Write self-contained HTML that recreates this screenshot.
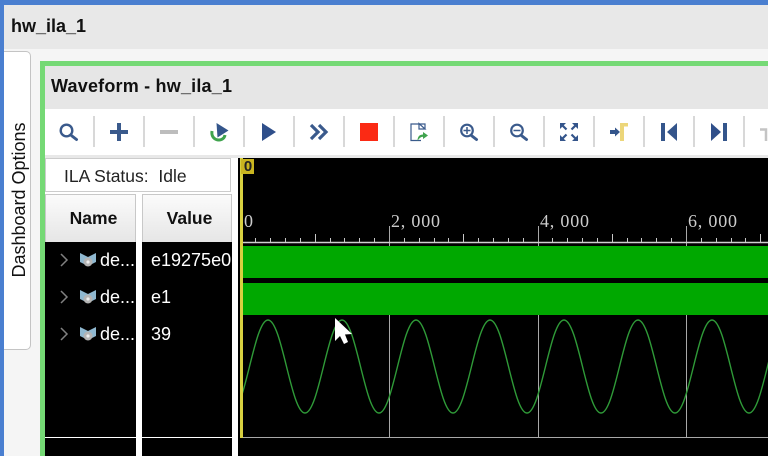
<!DOCTYPE html>
<html lang="en">
<head>
<meta charset="utf-8">
<title>hw_ila_1</title>
<style>
html,body{margin:0;padding:0;width:768px;height:456px;overflow:hidden;background:#f5f5f5;font-family:"Liberation Sans",sans-serif;color:#111}
div,span{position:absolute;white-space:nowrap}
.hdr{background:linear-gradient(#fbfbfb,#e6e6e6);border:1px solid #c8c8c8;border-bottom:0;box-sizing:border-box;font-weight:bold;font-size:17.500px;text-align:center;line-height:46px}
.w{color:#fff;font-size:18px;line-height:20px}
.t{color:#ccc;font:18px "Liberation Serif",serif;line-height:18px;letter-spacing:.8px}
</style>
</head>
<body>
<div style="left:0;top:0;width:768px;height:5px;background:#4a7fd0"></div>
<div style="left:0;top:0;width:4px;height:456px;background:#4a7fd0"></div>
<div style="left:4px;top:5px;width:764px;height:44px;background:#e8e8e8"></div>
<div style="left:11px;top:15px;font-weight:bold;font-size:18px;line-height:22px">hw_ila_1</div>

<div style="left:4px;top:51px;width:27px;height:299px;box-sizing:border-box;background:#fff;border:1px solid #c4c4c4;border-left:0;border-radius:0 5px 5px 0"></div>
<div style="left:19px;top:200px;transform:translate(-50%,-50%) rotate(-90deg);font-size:18px;line-height:20px">Dashboard Options</div>

<div style="left:40px;top:61px;width:728px;height:5px;background:#75d975"></div>
<div style="left:40px;top:61px;width:5px;height:395px;background:#75d975"></div>
<div style="left:45px;top:66px;width:723px;height:43px;background:#e6e6e6"></div>
<div style="left:51px;top:75px;font-weight:bold;font-size:18px;line-height:22px;letter-spacing:.2px">Waveform - hw_ila_1</div>
<div style="left:45px;top:109px;width:723px;height:46px;background:#fff"></div>
<div style="left:45px;top:155px;width:723px;height:3px;background:#e8e8e8"></div>
<div style="left:45px;top:158px;width:193px;height:298px;background:#fff"></div>
<div style="left:238px;top:158px;width:530px;height:298px;background:#000"></div>

<div style="left:45px;top:158px;width:186px;height:34px;box-sizing:border-box;background:#fff;border:1px solid #ccc;font-size:17.500px;line-height:34px;padding-left:18px;color:#222">ILA Status:&nbsp; Idle</div>
<div class="hdr" style="left:45px;top:194px;width:91px;height:48px;padding-left:6px">Name</div>
<div class="hdr" style="left:142px;top:194px;width:90px;height:48px;padding-left:5px">Value</div>
<div style="left:45px;top:242px;width:91px;height:214px;background:#000"></div>
<div style="left:142px;top:242px;width:90px;height:214px;background:#000"></div>
<div style="left:45px;top:437px;width:91px;height:1px;background:#fff"></div>
<div style="left:142px;top:437px;width:90px;height:1px;background:#fff"></div>

<div class="w" style="left:100px;top:250px">de...</div>
<div class="w" style="left:100px;top:287px">de...</div>
<div class="w" style="left:100px;top:324px">de...</div>
<div class="w" style="left:151px;top:250px">e19275e0</div>
<div class="w" style="left:151px;top:287px">e1</div>
<div class="w" style="left:151px;top:324px">39</div>

<svg style="position:absolute;left:0;top:0" width="768" height="456" viewBox="0 0 768 456" fill="none">
<!-- separators -->
<path d="M94 116V147M144 116V147M194 116V147M244 116V147M294 116V147M344 116V147M394 116V147M444 116V147M494 116V147M544 116V147M594 116V147M644 116V147M694 116V147M744 116V147" stroke="#d8d8d8" stroke-width="2"/>
<!-- search -->
<circle cx="66.500" cy="130.500" r="5.800" stroke="#3a5a8c" stroke-width="2.400"/>
<path d="M72 136L76.500 139.500" stroke="#3a5a8c" stroke-width="3" stroke-linecap="round"/>
<!-- plus / minus -->
<path d="M110 132H128M119 123V141" stroke="#3a5a8c" stroke-width="4"/>
<path d="M160 132H178" stroke="#bdbdbd" stroke-width="4"/>
<!-- run trigger immediate -->
<path d="M212 131C211 137 215 140 219 140C222 140 224.500 138 225 135" stroke="#3fa34d" stroke-width="3"/>
<path d="M216.500 123L228.500 130.500L217.500 137.500Z" fill="#34558b"/>
<!-- play -->
<path d="M262 123L276 132L262 141Z" fill="#2f4f8a"/>
<!-- chevrons -->
<path d="M311 125L318 132L311 139M319 125L326 132L319 139" stroke="#3a5a8c" stroke-width="3.200"/>
<!-- stop -->
<rect x="360" y="123" width="18" height="18" fill="#fb2a14"/>
<!-- export -->
<path d="M425 129V124H411V140.500H421M425 129L419 123.500V129Z" stroke="#3a5a8c" stroke-width="1.200" fill="#fff"/>
<path d="M417.500 141C417.500 136 420 134.500 423 134.500V132L428 135.500L423 139V136.800C421 136.800 419 138.500 417.500 141Z" fill="#3fa34d"/>
<!-- zoom in -->
<circle cx="467" cy="130.500" r="5.800" stroke="#3a5a8c" stroke-width="2.200"/>
<path d="M463.500 130.500H470.500M467 127V134" stroke="#3a5a8c" stroke-width="1.500"/>
<path d="M472 136L476.500 139.500" stroke="#3a5a8c" stroke-width="3" stroke-linecap="round"/>
<!-- zoom out -->
<circle cx="517" cy="130.500" r="5.800" stroke="#3a5a8c" stroke-width="2.200"/>
<path d="M513.500 130.500H520.500" stroke="#3a5a8c" stroke-width="1.500"/>
<path d="M522 136L526.500 139.500" stroke="#3a5a8c" stroke-width="3" stroke-linecap="round"/>
<!-- fit -->
<path d="M560 123H566L560 129ZM578 123V129L572 123ZM560 141V135L566 141ZM578 141H572L578 135Z" fill="#34558b"/>
<path d="M562 125L566.500 129.500M576 125L571.500 129.500M562 139L566.500 134.500M576 139L571.500 134.500" stroke="#34558b" stroke-width="2.200"/>
<!-- go to cursor -->
<path d="M610 130H615V127.500L620 132L615 136.500V134H610Z" fill="#34558b"/>
<path d="M620 141V123H628V126.500H624V141Z" fill="#ecd67a"/>
<!-- prev / next -->
<rect x="661" y="123" width="4" height="18" fill="#34558b"/>
<path d="M677 123V141L667 132Z" fill="#34558b"/>
<path d="M711 123V141L721 132Z" fill="#2f4f8a"/>
<rect x="723" y="123" width="4" height="18" fill="#34558b"/>
<!-- disabled trailing -->
<path d="M760 129.500H766V141" stroke="#c4c4c4" stroke-width="2.500"/>

<!-- tree chevrons -->
<path d="M61 254L67 260L61 266M61 291L67 297L61 303M61 328L67 334L61 340" stroke="#808080" stroke-width="1.500"/>
<!-- tree icons -->
<g>
<path d="M80 253L88 257L96 253V262L88 266L80 262Z" fill="#8fb8d0"/>
<circle cx="88" cy="262" r="4.500" fill="#b4b4b4"/><circle cx="88" cy="262" r="1.600" fill="#eee"/>
</g>
<g>
<path d="M80 290L88 294L96 290V299L88 303L80 299Z" fill="#8fb8d0"/>
<circle cx="88" cy="299" r="4.500" fill="#b4b4b4"/><circle cx="88" cy="299" r="1.600" fill="#eee"/>
</g>
<g>
<path d="M80 327L88 331L96 327V336L88 340L80 336Z" fill="#8fb8d0"/>
<circle cx="88" cy="336" r="4.500" fill="#b4b4b4"/><circle cx="88" cy="336" r="1.600" fill="#eee"/>
</g>

<!-- grid -->
<path d="M389.500 226V246M538.500 226V246M686.500 226V246M389.500 315V437M538.500 315V437M686.500 315V437" stroke="#a8a8a8" stroke-width="1"/>
<path d="M243 437.500H768" stroke="#a8a8a8" stroke-width="1"/>
<!-- ruler -->
<path d="M241 242.500H768" stroke="#d0d0d0" stroke-width="1.400"/>
<path d="M255.500 238V242M270.500 238V242M285.500 238V242M300.500 238V242M330.500 238V242M344.500 238V242M359.500 238V242M374.500 238V242M404.500 238V242M419.500 238V242M434.500 238V242M448.500 238V242M478.500 238V242M493.500 238V242M508.500 238V242M523.500 238V242M552.500 238V242M567.500 238V242M582.500 238V242M597.500 238V242M627.500 238V242M641.500 238V242M656.500 238V242M671.500 238V242M701.500 238V242M716.500 238V242M731.500 238V242M745.500 238V242M315.500 234V242M463.500 234V242M612.500 234V242M760.500 234V242" stroke="#c8c8c8" stroke-width="1"/>
<!-- buses -->
<rect x="243" y="246" width="525" height="32" fill="#00a800"/>
<rect x="243" y="283" width="525" height="32" fill="#00a800"/>
<!-- sine -->
<svg x="243" y="316" width="525" height="110" viewBox="243 316 525 110">
<path d="M231 413C245 413 254 320 268 320C282 320 291 413 305 413C319 413 328 320 342 320C356 320 365 413 379 413C393 413 402 320 416 320C430 320 439 413 453 413C467 413 476 320 490 320C504 320 513 413 527 413C541 413 550 320 564 320C578 320 587 413 601 413C615 413 624 320 638 320C652 320 661 413 675 413C689 413 698 320 712 320C726 320 735 413 749 413C763 413 772 320 786 320" stroke="#2f9a38" stroke-width="1.400"/>
</svg>
<!-- cursor line + marker -->
<rect x="240" y="158" width="3" height="280" fill="#d8d040"/>
<rect x="241" y="159" width="13" height="15" fill="#c9b520"/>
<!-- mouse pointer -->
<path d="M335 318V341L340 336L344 344L348 342L345 334.500L352 334Z" fill="#fff"/>
</svg>

<div style="left:242px;top:159px;width:12px;text-align:center;font:bold 15px/16px 'Liberation Sans',sans-serif;color:#222">0</div>
<div class="t" style="left:244px;top:212px">0</div>
<div class="t" style="left:391px;top:212px">2, 000</div>
<div class="t" style="left:540px;top:212px">4, 000</div>
<div class="t" style="left:688px;top:212px">6, 000</div>
</body>
</html>
